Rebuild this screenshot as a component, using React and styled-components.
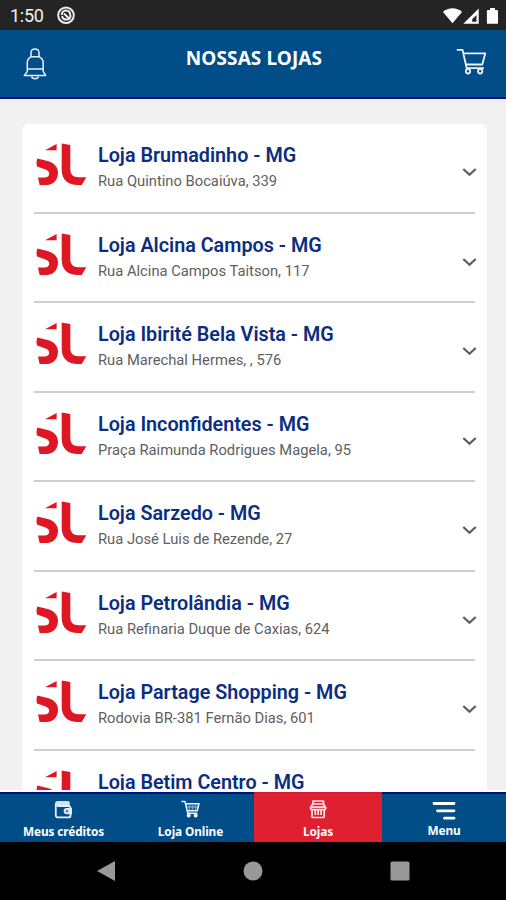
import React from "react";
import styled, { createGlobalStyle } from "styled-components";

const GlobalStyle = createGlobalStyle`
  * { box-sizing: border-box; }
  body { margin: 0; background: #000; font-family: Roboto, sans-serif; }
`;

const Screen = styled.div`
  width: 506px;
  height: 900px;
  display: flex;
  flex-direction: column;
  overflow: hidden;
  background: #f1f1f1;
`;

const StatusBar = styled.div`
  flex: 0 0 30px;
  display: flex;
  align-items: center;
  padding: 2px 7px 0 10px;
  background: #242424;
  color: #fff;
`;

const Clock = styled.span`
  width: 47px;
  font-size: 18px;
  line-height: 28px;
  letter-spacing: -0.25px;
  color: #f1f1f1;
`;

const StatusIcons = styled.div`
  margin-left: auto;
  display: flex;
`;

const Header = styled.header`
  flex: 0 0 69px;
  display: grid;
  grid-template-columns: 70px 1fr 70px;
  background: #004d87;
  border-bottom: 2px solid #000f7c;
`;

const HeaderIcon = styled.div`
  display: flex;
  justify-content: center;
  padding-top: 18px;
`;

const Title = styled.h1`
  margin: 0;
  padding: 15px 0 0 2px;
  text-align: center;
  font: 700 19px/26px "Noto Sans", sans-serif;
  letter-spacing: 0.1px;
  color: #fff;
`;

const Content = styled.main`
  flex: 1 1 0;
  min-height: 0;
  overflow: hidden;
  padding: 25px 19px 0 22px;
  border-bottom: 2px solid #fff;
`;

const Card = styled.ul`
  margin: 0;
  padding: 0 12px;
  list-style: none;
  background: #fff;
  border-radius: 6px 6px 0 0;
`;

const StoreRow = styled.li`
  height: 89.5px;
  display: grid;
  grid-template-columns: 64px 1fr 16px;
  padding-top: 17px;
  border-bottom: 2px solid #cecece;
`;

const StoreName = styled.h2`
  margin: 0;
  padding-top: 1px;
  white-space: nowrap;
  font-weight: 600;
  font-size: 19.75px;
  line-height: 27px;
  color: #0b2e80;
`;

const Address = styled.p`
  margin: 0;
  white-space: nowrap;
  font-size: 14.75px;
  line-height: 24px;
  color: #606060;
`;

const Toggle = styled.div`
  padding-top: 26px;
  margin: 0 -5px 0 0;
  display: flex;
  align-items: flex-start;
  justify-content: center;
`;

const TabBar = styled.nav`
  flex: 0 0 50px;
  display: grid;
  grid-template-columns: 127px 127px 128px 124px;
  background: #004d87;
`;

const Tab = styled.div`
  display: flex;
  flex-direction: column;
  align-items: center;
  padding-top: ${(p) => (p.$lowIcon ? 7 : 6)}px;
  border-top: 2px solid ${(p) => (p.$active ? "#d81934" : "#00107d")};
  background: ${(p) => (p.$active ? "#df2030" : "#004d87")};
`;

const TabLabel = styled.span`
  font: 700 11.8px/18px "Noto Sans", sans-serif;
  letter-spacing: -0.1px;
  margin-top: ${(p) => (p.$lowIcon ? 1 : 3)}px;
  color: #fff;
`;

const SystemBar = styled.div`
  flex: 0 0 58px;
  display: grid;
  grid-template-columns: 1fr 1fr 1fr;
  align-items: center;
  justify-items: center;
  padding: 0 33px;
  background: #000;
`;

const Logo = () => (
  <svg width="54" height="46" viewBox="0 0 54 46" fill="#df1725">
    <path d="M11 9.200 22.600 3v6.200z" />
    <path d="M27.700 2.400 36.300 4v24.300c0 5 3 8 8 8h8L47.700 44H44c-10.500 0-16.300-6-16.300-15z" />
    <path d="M3.400 17.600 14.500 20.200C20.500 22.200 24 26.200 24 31.600 24 39 19.500 44 12.500 44H5.600L4 36.600h6.600c2.800 0 4.600-1.400 4.600-3.800 0-2.200-1.600-3.600-4.400-4.600L3 25.400c-.8-2.600-.6-5.200.4-7.800z" />
  </svg>
);

const Chevron = () => (
  <svg width="15" height="11" viewBox="0 0 15 11" fill="none" stroke="#5c5c5c" strokeWidth="2.200">
    <path d="m1.300 2 6.200 5.800 6.200-5.800" />
  </svg>
);

const Bell = () => (
  <svg width="24" height="33" viewBox="0 0 24 33" fill="none" stroke="#e9effb" strokeWidth="1.500" strokeLinejoin="round">
    <path d="M8 9V5c0-2.600 1.600-4 4-4s4 1.400 4 4v4" />
    <path d="M4.300 21V14.500C4.300 11 7 8.700 9 8.700h6c2 0 5.200 2.300 5.200 5.800V21zM4.300 21v2.600L1.300 27.400h21.400l-2.500-3.800V21" />
    <path d="M8.500 28.500c.6 1.800 1.800 2.200 3.500 2.200s2.900-.4 3.500-2.200" />
  </svg>
);

const HeaderCart = () => (
  <svg width="31" height="28" viewBox="0 0 31 28" fill="none" stroke="#edf2fc" strokeWidth="1.800" strokeLinejoin="round" strokeLinecap="round">
    <path d="M1.500 1.800h5l4.200 18.400h16.500M7.300 5.300h22l-3 11.200H10" />
    <circle cx="12" cy="23.300" r="2.200" />
    <circle cx="24.200" cy="23.300" r="2.200" />
  </svg>
);

const Wallet = () => (
  <svg width="19" height="19" viewBox="0 0 19 19">
    <path d="M3.500 1h10.300c1.300 0 2 .8 2 2v3.500H3.200C.3 6.500.3 1 3.500 1z" fill="#d3e0ef" />
    <path d="M1.800 3.500v11.700c0 1.300.8 2.200 2.100 2.200h10.600c1.300 0 2-.8 2-2V8c0-1.200-.8-2-2-2h-11" fill="none" stroke="#e4edf8" strokeWidth="1.800" />
    <path d="M18 8h-5.300a3 3 0 0 0 0 6.200H18z" fill="#e4edf8" />
    <path d="M13 9.600v3M11.500 11.100h3" stroke="#406f9f" />
  </svg>
);

const SmallCart = () => (
  <svg width="19" height="19" viewBox="0 0 19 19" fill="none" stroke="#eef4ff" strokeWidth="1.500" strokeLinejoin="round">
    <path d="M.5 1.500H4l2.800 11.800h9.500M4.500 3.700H18l-1.800 7H6.300" />
    <path d="M8.500 5v5M11.500 5v5M14.500 5v5M5 7h12" opacity=".5" />
    <circle cx="7.700" cy="15.500" r="1.300" fill="#fff" />
    <circle cx="14.700" cy="15.500" r="1.300" fill="#fff" />
  </svg>
);

const Shop = () => (
  <svg width="19" height="19" viewBox="0 0 19 19" fill="none" stroke="#ffe9e9" strokeWidth="1.700" strokeLinejoin="round">
    <path d="M4 1h10.500v3H4zM3.800 4 1.500 7.700c0 1.700 1 2 1.900 2h11.400c1.200 0 1.900-.8 1.900-2L14.400 4zM3 9.700v6.800c0 .7.500 1 1 1h10.200c.7 0 1-.4 1-1V9.700" />
    <path d="M6.300 10v5M9.200 10v5M12.100 10v5M2.500 7.200h13.500" />
  </svg>
);

const MenuLines = () => (
  <svg width="24" height="19" viewBox="0 0 24 19" stroke="#fff" strokeWidth="2.800" strokeLinecap="round">
    <path d="M2 2.500h20M5.500 9.800h16.500M12.500 17.200h9.500" />
  </svg>
);

const RecordingGlyph = () => (
  <svg width="20" height="20" viewBox="0 0 20 20" fill="none" stroke="#eee" strokeWidth="2">
    <circle cx="9" cy="9.200" r="7.800" />
    <path d="M4.700 9c0-6 8.600-6 8.600.6M13.500 9.500c0 5.200-7.700 5.400-8.400.5M7 7.500l5 5" />
  </svg>
);

const SignalGlyphs = () => (
  <svg width="57" height="18" viewBox="0 0 57 18" fill="#fff">
    <path d="M1 5c5.200-5 13.800-5 19 0l-9.500 11.300z" />
    <path fillRule="evenodd" d="M21.300 16.700 36.700 1.600v15.100zm8.900-2h4.300V8l-4.300 4.200z" />
    <path d="M45.700 3H48V1h5v2h2.300c.5 0 .7.300.7.800v12.100c0 .6-.4.900-.9.900h-9.300c-.6 0-.9-.3-.9-.9V3.800c0-.5.300-.8.800-.8z" />
  </svg>
);

const stores = [
  ["Loja Brumadinho - MG", "Rua Quintino Bocaiúva, 339"],
  ["Loja Alcina Campos - MG", "Rua Alcina Campos Taitson, 117"],
  ["Loja Ibirité Bela Vista - MG", "Rua Marechal Hermes, , 576"],
  ["Loja Inconfidentes - MG", "Praça Raimunda Rodrigues Magela, 95"],
  ["Loja Sarzedo - MG", "Rua José Luis de Rezende, 27"],
  ["Loja Petrolândia - MG", "Rua Refinaria Duque de Caxias, 624"],
  ["Loja Partage Shopping - MG", "Rodovia BR-381 Fernão Dias, 601"],
  ["Loja Betim Centro - MG", ""],
];

const tabs = [
  { label: "Meus créditos", icon: <Wallet /> },
  { label: "Loja Online", icon: <SmallCart /> },
  { label: "Lojas", icon: <Shop />, active: true },
  { label: "Menu", icon: <MenuLines />, lowIcon: true },
];

export default function App() {
  return (
    <Screen>
      <GlobalStyle />
      <StatusBar>
        <Clock>1:50</Clock>
        <RecordingGlyph />
        <StatusIcons><SignalGlyphs /></StatusIcons>
      </StatusBar>
      <Header>
        <HeaderIcon><Bell /></HeaderIcon>
        <Title>NOSSAS LOJAS</Title>
        <HeaderIcon><HeaderCart /></HeaderIcon>
      </Header>
      <Content>
        <Card>
          {stores.map(([name, address]) => (
            <StoreRow key={name}>
              <Logo />
              <div>
                <StoreName>{name}</StoreName>
                <Address>{address}</Address>
              </div>
              <Toggle><Chevron /></Toggle>
            </StoreRow>
          ))}
        </Card>
      </Content>
      <TabBar>
        {tabs.map(({ label, icon, active, lowIcon }) => (
          <Tab key={label} $active={active} $lowIcon={lowIcon}>
            {icon}
            <TabLabel $lowIcon={lowIcon}>{label}</TabLabel>
          </Tab>
        ))}
      </TabBar>
      <SystemBar>
        <svg width="20" height="22" viewBox="0 0 20 22"><path d="M1 11 19 1v20z" fill="#999" /></svg>
        <svg width="20" height="20" viewBox="0 0 20 20"><circle cx="10" cy="10" r="9.500" fill="#999" /></svg>
        <svg width="20" height="20" viewBox="0 0 20 20"><rect x=".5" y=".5" width="19" height="19" rx="1.500" fill="#999" /></svg>
      </SystemBar>
    </Screen>
  );
}
